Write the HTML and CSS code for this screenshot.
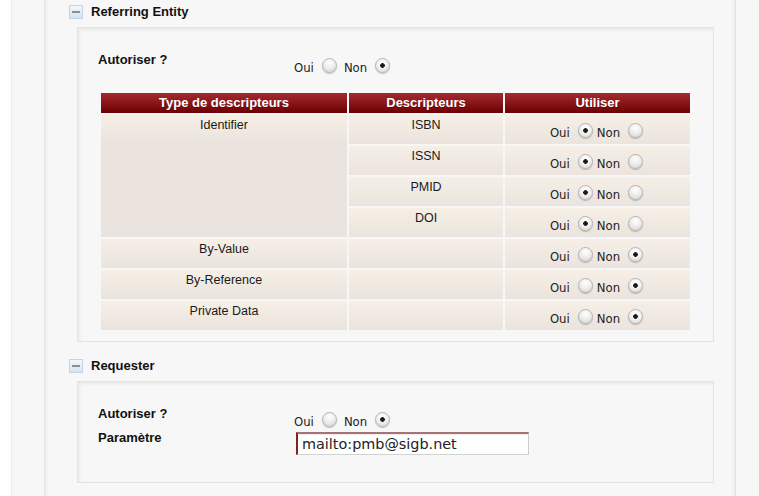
FILE: index.html
```html
<!DOCTYPE html>
<html lang="fr">
<head>
<meta charset="utf-8">
<title>Referring Entity</title>
<link rel="stylesheet" href="styles.css">
</head>
<body>
<div class="page">
  <div class="main">
    <section class="block">
      <h3 class="block-title"><span class="toggle"></span>Referring Entity</h3>
      <div class="panel">
        <div class="form-row">
          <div class="label-col">Autoriser ?</div>
          <div class="field-col radios">
            <span class="opt">Oui</span><input class="radio" type="radio" name="re_auth"><span class="opt gap">Non</span><input class="radio" type="radio" name="re_auth" checked>
          </div>
        </div>
        <table class="grid">
          <colgroup><col class="c1"><col class="c2"><col class="c3"></colgroup>
          <thead>
            <tr><th>Type de descripteurs</th><th>Descripteurs</th><th>Utiliser</th></tr>
          </thead>
          <tbody>
            <tr>
              <td rowspan="4" class="tall">Identifier</td>
              <td>ISBN</td>
              <td class="use"><span class="opt">Oui</span><input class="radio" type="radio" name="isbn" checked><span class="opt tight">Non</span><input class="radio" type="radio" name="isbn"></td>
            </tr>
            <tr>
              <td>ISSN</td>
              <td class="use"><span class="opt">Oui</span><input class="radio" type="radio" name="issn" checked><span class="opt tight">Non</span><input class="radio" type="radio" name="issn"></td>
            </tr>
            <tr>
              <td>PMID</td>
              <td class="use"><span class="opt">Oui</span><input class="radio" type="radio" name="pmid" checked><span class="opt tight">Non</span><input class="radio" type="radio" name="pmid"></td>
            </tr>
            <tr>
              <td>DOI</td>
              <td class="use"><span class="opt">Oui</span><input class="radio" type="radio" name="doi" checked><span class="opt tight">Non</span><input class="radio" type="radio" name="doi"></td>
            </tr>
            <tr>
              <td>By-Value</td>
              <td></td>
              <td class="use"><span class="opt">Oui</span><input class="radio" type="radio" name="byval"><span class="opt tight">Non</span><input class="radio" type="radio" name="byval" checked></td>
            </tr>
            <tr>
              <td>By-Reference</td>
              <td></td>
              <td class="use"><span class="opt">Oui</span><input class="radio" type="radio" name="byref"><span class="opt tight">Non</span><input class="radio" type="radio" name="byref" checked></td>
            </tr>
            <tr>
              <td>Private Data</td>
              <td></td>
              <td class="use"><span class="opt">Oui</span><input class="radio" type="radio" name="priv"><span class="opt tight">Non</span><input class="radio" type="radio" name="priv" checked></td>
            </tr>
          </tbody>
        </table>
      </div>
    </section>

    <section class="block block-next">
      <h3 class="block-title"><span class="toggle"></span>Requester</h3>
      <div class="panel panel-small">
        <div class="form-row">
          <div class="label-col">Autoriser ?</div>
          <div class="field-col radios">
            <span class="opt">Oui</span><input class="radio" type="radio" name="rq_auth"><span class="opt gap">Non</span><input class="radio" type="radio" name="rq_auth" checked>
          </div>
        </div>
        <div class="form-row row-param">
          <div class="label-col">Paramètre</div>
          <div class="field-col">
            <input class="text-input" type="text" value="mailto:pmb@sigb.net">
          </div>
        </div>
      </div>
    </section>
  </div>
</div>
</body>
</html>
```

FILE: styles.css
```css
html, body {
  margin: 0;
  padding: 0;
  background: #ffffff;
  font-family: "Liberation Sans", Arial, sans-serif;
  color: #111;
}

.page {
  margin-left: 11px;
  border-left: 1px solid #ececec;
  background: #f7f7f7;
  height: 496px;
  overflow: hidden;
}

.main {
  margin-left: 32px;
  width: 692px;
  height: 100%;
  box-sizing: border-box;
  border-left: 1px solid #e2e2e2;
  border-right: 1px solid #e2e2e2;
  box-shadow: inset 4px 0 4px -3px rgba(0, 0, 0, 0.07), inset -4px 0 4px -3px rgba(0, 0, 0, 0.07);
  padding-left: 24px;
}

.block-title {
  display: flex;
  align-items: center;
  height: 23px;
  margin: 0;
  font: bold 13px "Liberation Sans", Arial, sans-serif;
  color: #111;
}

.block-next {
  margin-top: 12px;
}

.toggle {
  position: relative;
  width: 12px;
  height: 12px;
  margin-right: 8px;
  border: 1px solid #c3d4e4;
  background: linear-gradient(#f3f7fb, #d5e2ee);
}

.toggle::after {
  content: "";
  position: absolute;
  left: 2px;
  right: 2px;
  top: 5px;
  height: 2px;
  background: #8d8d8d;
}

.panel {
  margin: 4px 0 0 8px;
  width: 637px;
  box-sizing: border-box;
  border: 1px solid #e3e3e3;
  background: #f7f7f7;
  box-shadow: inset 3px 3px 3px -1px rgba(0, 0, 0, 0.06);
  padding: 24px 20px 9px 20px;
}

.panel-small {
  height: 102px;
}

.form-row {
  display: flex;
  align-items: flex-start;
}

.label-col {
  width: 196px;
  flex: none;
  font: bold 13px/16px "Liberation Sans", Arial, sans-serif;
  color: #111;
}

.radios {
  padding-top: 6px;
  line-height: 15px;
}

.opt {
  font-family: "DejaVu Sans Condensed", "DejaVu Sans", sans-serif;
  font-stretch: condensed;
  font-size: 13px;
  color: #222;
  vertical-align: baseline;
}

.opt.gap {
  margin-left: 7px;
}

.opt.tight {
  margin-left: 4px;
}

.radio {
  -webkit-appearance: none;
  appearance: none;
  width: 15px;
  height: 15px;
  margin: 0 0 -1px 8px;
  padding: 0;
  box-sizing: border-box;
  border: 1px solid #b4b4b4;
  border-radius: 50%;
  background: radial-gradient(circle at 50% 30%, #ffffff 0, #eeeeee 45%, #d2d2d2 100%);
  box-shadow: 0 1px 1px rgba(0, 0, 0, 0.22);
  vertical-align: baseline;
}

.radio:checked {
  background: radial-gradient(circle, #1a1a1a 0, #1a1a1a 2px, rgba(0, 0, 0, 0) 2.6px),
              radial-gradient(circle at 50% 30%, #ffffff 0, #f2f2f2 45%, #d6d6d6 100%);
}

.grid {
  margin: 16px 0 0 1px;
  width: 593px;
  table-layout: fixed;
  border-collapse: separate;
  border-spacing: 2px;
}

.grid col.c1 { width: 246px; }
.grid col.c2 { width: 154px; }
.grid col.c3 { width: 185px; }

.grid th {
  height: 20px;
  padding: 0;
  background: linear-gradient(#a52b2f, #6c0002);
  color: #ffffff;
  font: bold 13px/20px "Liberation Sans", Arial, sans-serif;
  text-align: center;
  text-shadow: 0 1px 0 rgba(0, 0, 0, 0.25);
}

.grid tbody tr {
  height: 29px;
}

.grid td {
  padding: 3px 0 0 0;
  vertical-align: top;
  text-align: center;
  font: 12.5px/15px "Liberation Sans", Arial, sans-serif;
  color: #1a1a1a;
  background: linear-gradient(#f5efe6, #ebe4de 29px) no-repeat, #eae3dd;
}

.grid td.use {
  padding-top: 8px;
  padding-right: 2px;
  white-space: nowrap;
}

.row-param {
  margin-top: 1px;
}

.text-input {
  display: block;
  margin: 2px 0 0 2px;
  width: 233px;
  height: 23px;
  box-sizing: border-box;
  padding: 0 4px;
  border-style: solid;
  border-width: 2px 1px 1px 2px;
  border-color: #a87272 #cccccc #d2d2d2 #7d2525;
  background: #ffffff;
  box-shadow: inset 0 1px 1px rgba(0, 0, 0, 0.08);
  font-family: "DejaVu Sans", sans-serif;
  font-size: 14.4px;
  color: #222;
  outline: none;
}
```
